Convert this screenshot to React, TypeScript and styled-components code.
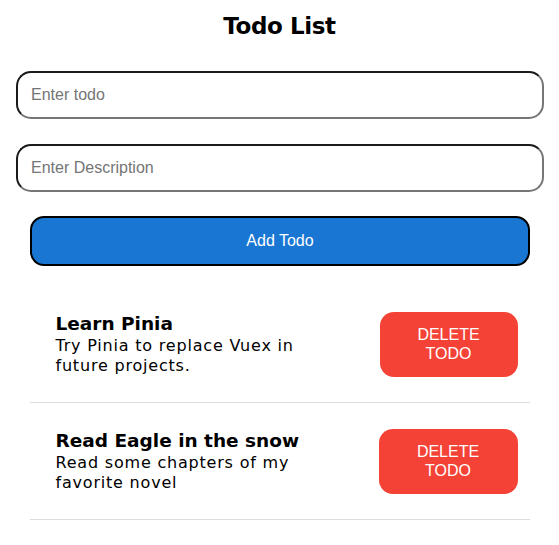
import React, { useState } from "react";
import styled, { createGlobalStyle } from "styled-components";

const GlobalStyle = createGlobalStyle`
  html, body { margin: 0; padding: 0; background: #ffffff; }
  body { font-family: "DejaVu Sans", "Open Sans", sans-serif; color: #000; }
  * { box-sizing: border-box; }
`;

const Page = styled.div`
  display: flex;
  flex-direction: column;
  padding: 12px 0 0;
`;

const Title = styled.h1`
  margin: 0 0 31px;
  text-align: center;
  font-family: "DejaVu Sans", sans-serif;
  font-size: 23px;
  font-weight: 700;
  letter-spacing: -0.4px;
  line-height: 28px;
`;

const Form = styled.div`
  display: flex;
  flex-direction: column;
  gap: 25px;
  padding: 0 15px 0 16px;
`;

const TextInput = styled.input`
  width: 100%;
  height: 48px;
  padding: 0 13px;
  border: 2px solid;
  border-color: #1a1a1a #767676 #767676 #1a1a1a;
  border-radius: 15px;
  font-family: "Liberation Sans", Arial, sans-serif;
  font-size: 16px;
  color: #000;
  outline: none;
  &::placeholder { color: #757575; }
`;

const AddButton = styled.button`
  margin: -1px 14px 0;
  height: 50px;
  border: 2px solid #000;
  border-radius: 14px;
  background: #1976d2;
  color: #fff;
  font-family: "Liberation Sans", Arial, sans-serif;
  font-size: 16px;
  cursor: pointer;
`;

const List = styled.ul`
  list-style: none;
  margin: 20px auto 0;
  padding: 0;
  width: 500px;
`;

const Item = styled.li`
  display: flex;
  align-items: center;
  justify-content: space-between;
  height: 117px;
  padding: 0 12px 0 26px;
  border-bottom: 1px solid #dddddd;
`;

const ItemText = styled.div`
  width: 255px;
  display: flex;
  flex-direction: column;
`;

const ItemTitle = styled.div`
  font-size: 18.5px;
  font-weight: 700;
  line-height: 24px;
  white-space: nowrap;
`;

const ItemDesc = styled.div`
  font-size: 16px;
  letter-spacing: 0.8px;
  line-height: 20px;
`;

const DeleteButton = styled.button<{ $w: number }>`
  width: ${(p) => p.$w}px;
  height: 65px;
  padding: 0 20px;
  border: none;
  border-radius: 14px;
  background: #f44336;
  color: #fff;
  font-family: "Liberation Sans", Arial, sans-serif;
  font-size: 16px;
  line-height: 19px;
  text-transform: uppercase;
  cursor: pointer;
`;

type Todo = { id: number; title: string; description: string };

const initial: Todo[] = [
  { id: 1, title: "Learn Pinia", description: "Try Pinia to replace Vuex in future projects." },
  { id: 2, title: "Read Eagle in the snow", description: "Read some chapters of my favorite novel" },
];

export default function App() {
  const [todos, setTodos] = useState<Todo[]>(initial);
  const [title, setTitle] = useState("");
  const [desc, setDesc] = useState("");

  const add = () => {
    if (!title.trim()) return;
    setTodos([...todos, { id: Date.now(), title, description: desc }]);
    setTitle("");
    setDesc("");
  };

  return (
    <Page>
      <GlobalStyle />
      <Title>Todo List</Title>
      <Form>
        <TextInput placeholder="Enter todo" value={title} onChange={(e) => setTitle(e.target.value)} />
        <TextInput placeholder="Enter Description" value={desc} onChange={(e) => setDesc(e.target.value)} />
        <AddButton onClick={add}>Add Todo</AddButton>
      </Form>
      <List>
        {todos.map((t, i) => (
          <Item key={t.id}>
            <ItemText>
              <ItemTitle>{t.title}</ItemTitle>
              <ItemDesc>{t.description}</ItemDesc>
            </ItemText>
            <DeleteButton $w={i === 1 ? 139 : 138} onClick={() => setTodos(todos.filter((x) => x.id !== t.id))}>
              Delete Todo
            </DeleteButton>
          </Item>
        ))}
      </List>
    </Page>
  );
}
